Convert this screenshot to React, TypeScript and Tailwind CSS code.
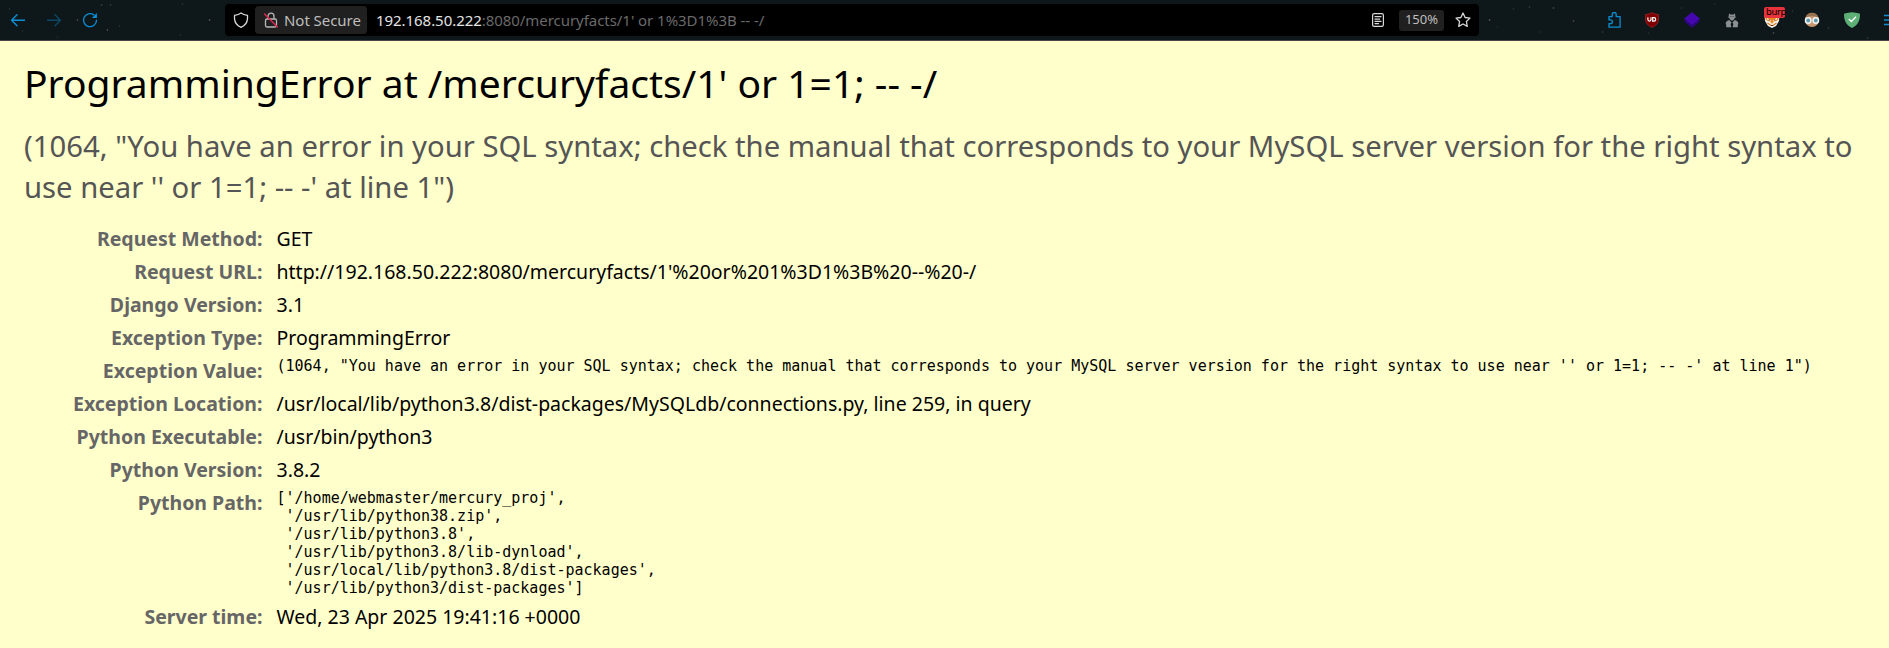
import React from 'react';

const STARS: [number, number, number][] = [
  [101, 5, 0.5], [110, 5, 0.4], [77, 20, 0.6], [209, 20, 0.8], [107, 30, 0.7], [182, 4, 0.35], [119, 26, 0.3],
  [9, 9, 0.3], [22, 31, 0.25], [180, 35, 0.3], [57, 37, 0.25], [1489, 20, 0.8], [1529, 7, 0.4], [1553, 8, 0.6],
  [1573, 21, 0.6], [1513, 9, 0.3], [1602, 32, 0.35], [1773, 33, 0.6], [1828, 28, 0.4], [1714, 4, 0.25], [1681, 8, 0.3],
  [1867, 38, 0.4], [1648, 33, 0.25], [1540, 32, 0.2], [1497, 27, 0.2], [1792, 11, 0.3],
];

const Stars = () => (
  <svg className="pointer-events-none absolute inset-0 h-full w-full" aria-hidden="true">
    {STARS.map(([x, y, o], i) => (
      <circle key={i} cx={x + 0.5} cy={y} r="0.8" fill="#8a807a" opacity={o} />
    ))}
  </svg>
);

const Back = () => (
  <svg width="16" height="16" viewBox="0 0 16 16" fill="none" stroke="currentColor" strokeWidth="1.4" strokeLinecap="round" strokeLinejoin="round">
    <path d="M14.5 8.3H1.8M7 2.8 1.6 8.3 7 13.8" />
  </svg>
);

const Reload = () => (
  <svg width="16" height="16" viewBox="0 0 16 16" fill="none" stroke="currentColor" strokeWidth="1.3" strokeLinecap="round">
    <path d="M11.8 2.9A6.5 6.5 0 1 0 14.5 8.2" />
    <path d="M14.9 1v5H9.9z" fill="currentColor" stroke="none" />
  </svg>
);

const Shield = () => (
  <svg width="16" height="16" viewBox="0 0 16 16" fill="none" stroke="#d8d8d8" strokeWidth="1.3" strokeLinejoin="round">
    <path d="M8 .9C9.900 2.300 12 2.900 14.500 3.400V6.600C14.300 10.500 11.800 13.600 8 15.300 4.200 13.600 1.700 10.500 1.500 6.600V3.400C4 2.900 6.100 2.300 8 .9z" />
  </svg>
);

const Lock = () => (
  <svg width="16" height="16" viewBox="0 0 16 16" fill="none">
    <path d="M5 7V4.2a3 3 0 0 1 6 0V7M4 7h8a1.5 1.5 0 0 1 1.5 1.5v5A1.5 1.5 0 0 1 12 15H4a1.5 1.5 0 0 1-1.5-1.5v-5A1.5 1.5 0 0 1 4 7z" stroke="#b8b8b8" strokeWidth="1.3" />
    <path d="M1.6 2 14.4 15" stroke="#e22850" strokeWidth="1.4" strokeLinecap="round" />
  </svg>
);

const Reader = () => (
  <svg width="14" height="16" viewBox="0 0 14 16" fill="none" stroke="#d8d8d8" strokeWidth="1.2" strokeLinecap="round">
    <rect x="1.6" y="1.6" width="10.8" height="12.8" rx="1.6" />
    <path d="M4 4.7h6M4 7.2h4.6M4 9.4h6M4 11.6h3.6" />
  </svg>
);

const Star = () => (
  <svg width="16" height="16" viewBox="0 0 16 16" fill="none" stroke="#d8d8d8" strokeWidth="1.3" strokeLinejoin="round">
    <path d="M8 1l2.1 4.5 4.9.6-3.6 3.4.9 4.9L8 12l-4.3 2.4.9-4.9L1 6.1l4.9-.6z" />
  </svg>
);

const Puzzle = () => (
  <svg width="16" height="16" viewBox="0 0 16 16" fill="none" stroke="#0a8fd6" strokeWidth="1.3" strokeLinejoin="round">
    <path d="M2 4.600h3.200V2.500a2 2 0 0 1 4 0v2.100h3.900v10.600H2v-3.500h1.500a1.9 1.9 0 0 0 0-3.8H2z" />
  </svg>
);

const Ublock = () => (
  <svg width="16" height="16" viewBox="0 0 16 16">
    <path d="M8 .6c2 1.200 4 1.700 6.500 1.900v4.600C14.500 11 12 13.800 8 15.400 4 13.800 1.500 11 1.500 7.100V2.500C4 2.300 6 1.800 8 .6z" fill="#800000" stroke="#a52a2a" strokeWidth=".7" />
    <path d="M3.900 5.300v2.300a1.500 1.500 0 0 0 3.100 0V5.300" fill="none" stroke="#fff" strokeWidth="1.200" />
    <path d="M8.700 5.700H10a1.700 1.700 0 0 1 0 3.400H8.700z" fill="none" stroke="#fff" strokeWidth="1.200" />
  </svg>
);

const Layers = () => (
  <svg width="16" height="16" viewBox="0 0 16 16">
    <path d="M0 9.500 8 4l8 5.500L8 16z" fill="#2a0878" />
    <path d="M0 6.800 8 0l8 6.800L8 13z" fill="#4507ae" />
  </svg>
);

const Spy = () => (
  <svg width="14" height="16" viewBox="0 0 14 16" fill="#8c9093">
    <path d="M4 1.200 5.300 2.400h3.400L10 1.200l.3 3.300 1 1H10L8.800 7.800 7 8.800 5.200 7.800 4 5.500H2.700l1-1z" />
    <path d="M4.200 8 6.600 10.400 5.600 12l.8 3.200H1.200V13L.6 11 2 9z" />
    <path d="M9.800 8 7.400 10.400 8.400 12l-.8 3.200h5.200V13l.6-2L12 9z" />
    <path d="M5.200 4.500h1.200M7.600 4.500h1.200" stroke="#30383b" strokeWidth=".8" />
  </svg>
);

const Fox = () => (
  <svg width="16" height="16" viewBox="0 0 16 16">
    <path d="M.5 3h15L15 9l-3 5-4 2-4-2L1 9z" fill="#f5f1ec" />
    <path d="M1.500 3h13v4.500L12.500 9l-2.700.5L8 12 6.200 9.500 3.500 9l-2-1.500z" fill="#ef8a1d" />
    <path d="M3 6.500 6.500 9M13 6.500 9.500 9" stroke="#fff" strokeWidth="1.100" />
    <path d="M3.500 11 7 13.500h2l3.500-2.500" fill="none" stroke="#d97a1c" strokeWidth="1.200" />
    <path d="M4.500 8h1.500M10 8h1.500M7 13.500h2" stroke="#5a2c15" />
  </svg>
);

const Face = () => (
  <svg width="16" height="16" viewBox="0 0 16 16">
    <circle cx="8" cy="8" r="7" fill="#c79872" />
    <path d="M1.500 6.500C2 2.500 5 .8 8 .8s6 1.700 6.500 5.700L11 4.300H5z" fill="#967250" />
    <circle cx="4.200" cy="8.500" r="2.700" fill="#5b9aae" stroke="#f3f3f3" strokeWidth="1.500" />
    <circle cx="11.800" cy="8.500" r="2.700" fill="#5b9aae" stroke="#f3f3f3" strokeWidth="1.500" />
  </svg>
);

const Guard = () => (
  <svg width="16" height="16" viewBox="0 0 16 16">
    <path d="M8 .2c2 .1 5.500.6 8 1.500C16 8.500 14 13 8 16 2 13 0 8.500 0 1.700 2.500.8 6 .3 8 .2z" fill="#5db075" />
    <path d="M4.800 7 7.400 9.600 12 4.800" fill="none" stroke="#fff" strokeWidth="1.400" />
  </svg>
);

const Toolbar = () => (
  <header className="relative flex h-[41px] items-start overflow-hidden border-b border-[#4a4548] bg-[#0e181b] font-['Noto_Sans',sans-serif]">
    <Stars />
    <nav className="flex h-10 w-[225px] shrink-0 items-center gap-5 pl-2.5 text-[#0a8fd6]">
      <Back />
      <span className="-scale-x-100 opacity-40"><Back /></span>
      <Reload />
    </nav>
    <div className="relative mt-1 flex h-8 w-[1254px] shrink-0 items-center rounded bg-black pl-2 text-base">
      <Shield />
      <div className="ml-1.5 flex h-7 w-28 items-center gap-[5px] rounded bg-[#202020] pl-2 whitespace-nowrap text-[#bebebe]">
        <Lock />
        <span className="text-[15px] tracking-[-0.05px]">Not Secure</span>
      </div>
      <p className="ml-[9px] grow whitespace-pre text-[15px] tracking-[-0.05px] text-[#6a6a6a]">
        <span className="text-[#e4e4e4]">192.168.50.222</span>:8080/mercuryfacts/1' or 1%3D1%3B -- -/
      </p>
      <Reader />
      <span className="ml-3.5 flex h-[21px] w-[45px] items-center justify-center rounded-[3px] bg-[#202020] text-[13px] text-[#bebebe]">150%</span>
      <span className="mr-2 ml-[11px]"><Star /></span>
    </div>
    <div className="relative flex h-10 shrink-0 items-center pl-32">
      <span className="flex w-[25px]"><Puzzle /></span>
      <span className="flex w-10 justify-center"><Ublock /></span>
      <span className="flex w-10 justify-center"><Layers /></span>
      <span className="flex w-10 justify-center"><Spy /></span>
      <span className="relative flex w-10 justify-center">
        <Fox />
        <span className="absolute -top-[5px] left-3 h-[11px] w-[21px] rounded-[2px] bg-[#e8323c] pl-0.5 text-[9.500px] leading-[10px] tracking-[-0.4px] text-black">burp</span>
      </span>
      <span className="flex w-10 justify-center"><Face /></span>
      <span className="flex w-10 justify-center"><Guard /></span>
      <svg className="ml-[11px] shrink-0" width="16" height="16" viewBox="0 0 16 16" stroke="#0a8fd6" strokeWidth="1.3">
        <path d="M1 3.500h14M1 8h14M1 12.500h14" />
      </svg>
    </div>
  </header>
);

const ERROR = `(1064, "You have an error in your SQL syntax; check the manual that corresponds to your MySQL server version for the right syntax to use near '' or 1=1; -- -' at line 1")`;

const PATHS = `['/home/webmaster/mercury_proj',
 '/usr/lib/python38.zip',
 '/usr/lib/python3.8',
 '/usr/lib/python3.8/lib-dynload',
 '/usr/local/lib/python3.8/dist-packages',
 '/usr/lib/python3/dist-packages']`;

const ROWS: { label: string; value: string; pre?: boolean }[] = [
  { label: 'Request Method:', value: 'GET' },
  { label: 'Request URL:', value: "http://192.168.50.222:8080/mercuryfacts/1'%20or%201%3D1%3B%20--%20-/" },
  { label: 'Django Version:', value: '3.1' },
  { label: 'Exception Type:', value: 'ProgrammingError' },
  { label: 'Exception Value:', value: ERROR, pre: true },
  { label: 'Exception Location:', value: '/usr/local/lib/python3.8/dist-packages/MySQLdb/connections.py, line 259, in query' },
  { label: 'Python Executable:', value: '/usr/bin/python3' },
  { label: 'Python Version:', value: '3.8.2' },
  { label: 'Python Path:', value: PATHS, pre: true },
  { label: 'Server time:', value: 'Wed, 23 Apr 2025 19:41:16 +0000' },
];

export default function App() {
  return (
    <div className="h-[648px] overflow-hidden bg-[#ffffcc] font-['Noto_Sans',sans-serif] text-black">
      <Toolbar />
      <main className="pt-[15px] pl-6">
        <h1 className="text-[39px] leading-[53px]">ProgrammingError at /mercuryfacts/1' or 1=1; -- -/</h1>
        <h2 className="mt-[17px] w-[1835px] text-[29.250px] leading-[41px] text-[#555]">{ERROR}</h2>
        <table className="mt-[14px] border-collapse text-[19.500px] leading-[27px]">
          <tbody>
            {ROWS.map((row) => (
              <tr key={row.label} className="align-top">
                <th className="w-[243px] py-[3px] pr-[4.500px] text-right font-bold text-[#666]">{row.label}</th>
                <td className="py-[3px] pl-[9.500px]">
                  {row.pre ? (
                    <pre className="font-['DejaVu_Sans_Mono',monospace] text-[15px] leading-[18px]">{row.value}</pre>
                  ) : (
                    row.value
                  )}
                </td>
              </tr>
            ))}
          </tbody>
        </table>
      </main>
    </div>
  );
}
